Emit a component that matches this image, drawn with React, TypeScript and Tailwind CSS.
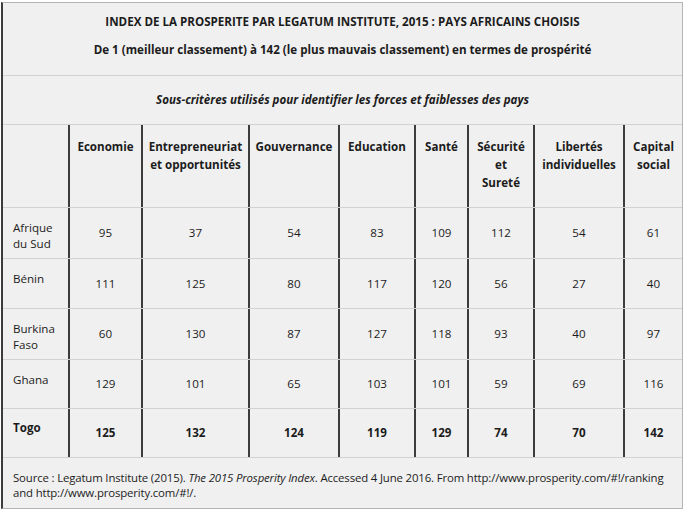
const columns = [
  ["Economie"],
  ["Entrepreneuriat", "et opportunités"],
  ["Gouvernance"],
  ["Education"],
  ["Santé"],
  ["Sécurité", "et", "Sureté"],
  ["Libertés", "individuelles"],
  ["Capital", "social"],
];

const rows = [
  { country: ["Afrique", "du Sud"], values: [95, 37, 54, 83, 109, 112, 54, 61], h: "h-[51px]" },
  { country: ["Bénin"], values: [111, 125, 80, 117, 120, 56, 27, 40], h: "h-[50px]" },
  { country: ["Burkina", "Faso"], values: [60, 130, 87, 127, 118, 93, 40, 97], h: "h-[51px]" },
  { country: ["Ghana"], values: [129, 101, 65, 103, 101, 59, 69, 116], h: "h-[49px]" },
];

const togo = [125, 132, 124, 119, 129, 74, 70, 142];

const grid = "grid grid-cols-[65px_73px_107px_90px_76px_53px_66px_90px_1fr]";

export default function App() {
  return (
    <div
      className="w-[684px] h-[512px] bg-white pt-[2px] pl-[1px] text-[11.6px] text-[#1c1c1c]"
      style={{ fontFamily: '"Open Sans", "Noto Sans", sans-serif' }}
    >
      <div className="w-[682px] h-[507px] bg-[#f0f0f0] border-l-2 border-l-[#3c3c3c] border-t border-r border-b border-[#b4b4b4] flex flex-col">
        <div className="h-[73px] shrink-0 border-b border-[#d2d2d2] flex flex-col items-center pt-[9px] gap-[8px] font-bold leading-[20px]">
          <div>INDEX DE LA PROSPERITE PAR LEGATUM INSTITUTE, 2015 : PAYS AFRICAINS CHOISIS</div>
          <div>De 1 (meilleur classement) à 142 (le plus mauvais classement) en termes de prospérité</div>
        </div>

        <div className="h-[49px] shrink-0 border-b border-[#d2d2d2] flex items-center justify-center font-bold italic">
          Sous-critères utilisés pour identifier les forces et faiblesses des pays
        </div>

        <div className={`${grid} h-[83px] shrink-0 border-b border-[#d2d2d2]`}>
          <div />
          {columns.map((label, i) => (
            <div
              key={i}
              className="border-l-2 border-[#3c3c3c] flex flex-col items-center pt-[13px] font-bold leading-[18px] text-center"
            >
              {label.map((l) => (
                <span key={l}>{l}</span>
              ))}
            </div>
          ))}
        </div>

        {rows.map((r) => (
          <div key={r.country.join(" ")} className={`${grid} ${r.h} shrink-0 border-b border-[#d2d2d2]`}>
            <div className="pl-[10px] pt-[12px] leading-[16px] flex flex-col">
              {r.country.map((l) => (
                <span key={l}>{l}</span>
              ))}
            </div>
            {r.values.map((v, i) => (
              <div key={i} className="border-l-2 border-[#3c3c3c] flex items-center justify-center">
                {v}
              </div>
            ))}
          </div>
        ))}

        <div className={`${grid} h-[49px] shrink-0 border-b border-[#d2d2d2] font-bold`}>
          <div className="pl-[10px] pt-[11px] leading-[16px]">Togo</div>
          {togo.map((v, i) => (
            <div key={i} className="border-l-2 border-[#3c3c3c] flex items-center justify-center">
              {v}
            </div>
          ))}
        </div>

        <div className="flex-1 pl-[10px] pt-[12px] leading-[15px] whitespace-nowrap text-[11.4px] tracking-[-0.15px]">
          <p>
            Source : Legatum Institute (2015). <i>The 2015 Prosperity Index</i>. Accessed 4 June 2016. From
            http://www.prosperity.com/#!/ranking
          </p>
          <p>and http://www.prosperity.com/#!/.</p>
        </div>
      </div>
    </div>
  );
}
